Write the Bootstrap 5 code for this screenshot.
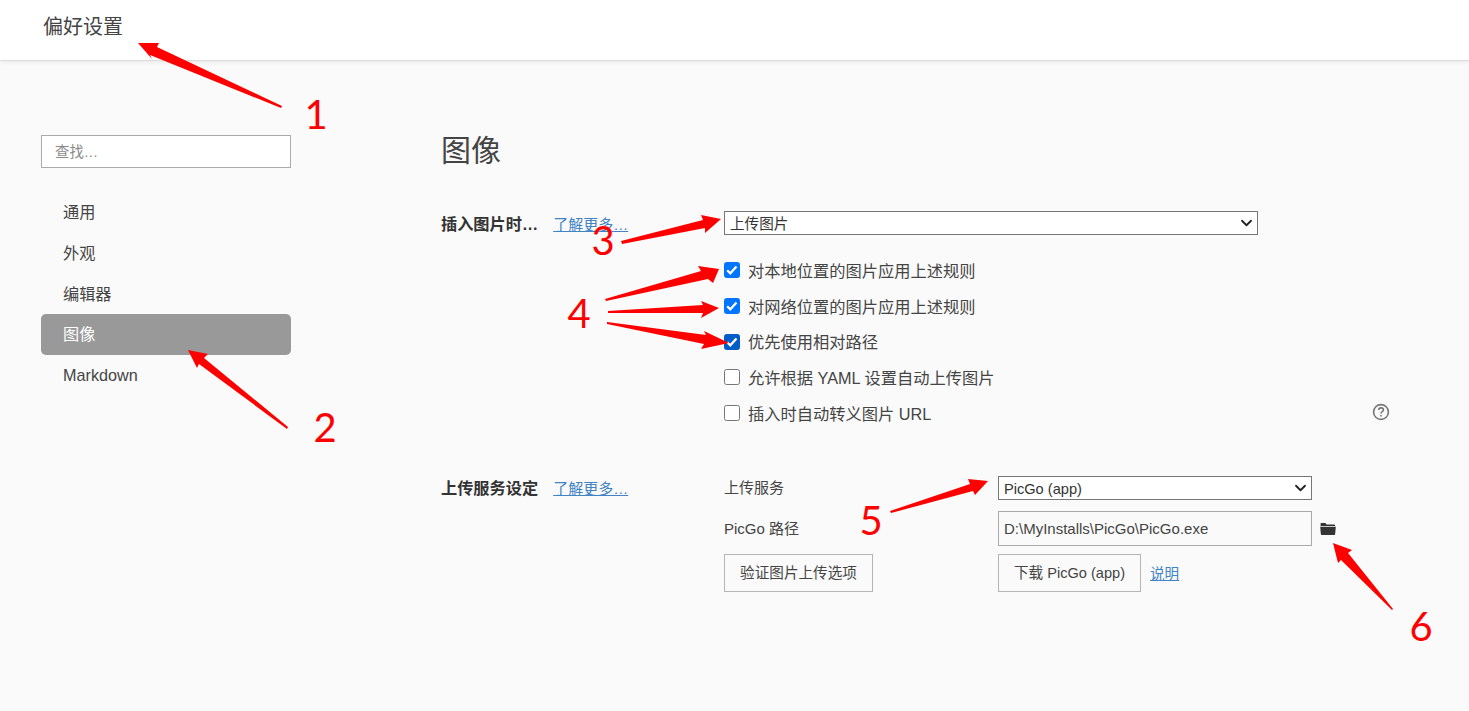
<!DOCTYPE html>
<html lang="zh-CN">
<head>
<meta charset="utf-8">
<title>偏好设置</title>
<link href="https://cdn.jsdelivr.net/npm/bootstrap@5.3.0/dist/css/bootstrap.min.css" rel="stylesheet">
<style>
html,body{height:711px;overflow:hidden}
body{background:#fafafa;color:#444;font-family:"Liberation Sans","Noto Sans CJK SC",sans-serif;font-size:16px;position:relative}
.top-bar{height:61px;background:#fff;border-bottom:1px solid #dcdcdc;box-shadow:0 1px 5px rgba(0,0,0,.08);padding:0 0 6px 43px;font-size:20px;color:#444}
.side-col{width:441px;padding:74px 150px 0 41px;flex:none}
.search-box{height:33px;border:1px solid #aaa;border-radius:0;background:#fff;font-size:14.4px;padding:0 13px;color:#444}
.search-box::placeholder{color:#8a8a8a}
.side-nav{margin-top:24px}
.side-nav .nav-link{height:40.8px;line-height:40px;padding:0 22px;color:#444;font-size:16.2px;border-radius:5px}
.side-nav .nav-link.active{background:#999;color:#fff}
.main-col{width:960px;flex:none}
.page-title{font-size:30px;font-weight:400;color:#444;line-height:46px;margin:67px 0 37px}
.sec-row{display:flex}
.sec-label{width:283px;flex:none;display:flex;align-items:baseline;padding-top:1px}
.sec-label strong{font-size:16.2px;font-weight:700;color:#333;margin-right:15px}
.more-link{font-size:15px;color:#4183c4}
.pick{height:24px;border:1px solid #767676;border-radius:0;font-size:14.6px;line-height:22px;padding:1px 24px 0 5px;color:#333;background-color:#fff;background-position:right 3px center;background-size:15px 12px;--bs-form-select-bg-img:none;background-image:url("data:image/svg+xml,%3csvg xmlns='http://www.w3.org/2000/svg' viewBox='0 0 16 16'%3e%3cpath fill='none' stroke='%23222' stroke-linecap='round' stroke-linejoin='round' stroke-width='2.4' d='M2 5l6 6 6-6'/%3e%3c/svg%3e")}
.pick-wide{width:534px}
.pick-mid{width:314px}
.check-list{width:666px;margin-top:18.6px}
.check-line{height:35.6px;display:flex;align-items:center;gap:8px;font-size:16.25px;color:#444}
.check-line .form-check-input{width:16px;height:16px;margin:0 0 2px;border:1px solid #767676;border-radius:2.5px;background-color:#fff;flex:none}
.check-line .form-check-input:checked{background-color:#0075ff;border-color:#0075ff;background-size:16px 16px;--bs-form-check-bg-image:url("data:image/svg+xml,%3csvg xmlns='http://www.w3.org/2000/svg' viewBox='0 0 16 16'%3e%3cpath fill='none' stroke='%23fff' stroke-width='2.3' d='M3.2 8.2l3.1 3.1 6.2-6.8'/%3e%3c/svg%3e")}
.check-line .form-check-input.pressed:checked{background-color:#005cc8;border-color:#005cc8}
.help-mark{margin-left:auto;margin-bottom:3px;display:block}
.second-sec{margin-top:44.4px}
.second-sec .sec-label{padding-top:0}
.field-line{display:flex;align-items:center}
.field-name{width:274px;flex:none;font-size:15px;color:#444;padding-top:1px}
.field-name-low{padding-top:4px}
.path-box{width:314px;height:35px;border:1px solid #aaa;border-radius:0;background:transparent;font-size:15px;padding:1px 5px 0;color:#444;margin:11px 0 8px}
.ghost-btn{height:38px;border:1px solid #b5b5b5;border-radius:0;background:transparent;color:#444;font-size:14.6px;padding:1px 0 0}
.btn-verify{width:149px;margin-right:125px}
.btn-get{width:143px}
.doc-link{font-size:14.6px;color:#4183c4;margin:3px 0 0 9px}
.folder-mark{margin-left:8px;margin-top:4px;display:block}
.mark-layer{position:absolute;left:0;top:0;pointer-events:none}
.mark-layer text{font-family:Lato,"Liberation Sans",sans-serif;font-size:40px;fill:#f00}
</style>
</head>
<body>
<header class="top-bar d-flex align-items-center">偏好设置</header>
<div class="d-flex">
  <aside class="side-col">
    <input class="form-control search-box shadow-none" placeholder="查找…">
    <nav class="nav flex-column side-nav">
      <a class="nav-link" href="#">通用</a>
      <a class="nav-link" href="#">外观</a>
      <a class="nav-link" href="#">编辑器</a>
      <a class="nav-link active" href="#">图像</a>
      <a class="nav-link" href="#">Markdown</a>
    </nav>
  </aside>
  <main class="main-col">
    <h2 class="page-title">图像</h2>
    <section class="sec-row">
      <div class="sec-label"><strong>插入图片时…</strong><a class="more-link" href="#">了解更多…</a></div>
      <div>
        <select class="form-select pick pick-wide shadow-none"><option>上传图片</option></select>
        <div class="check-list">
          <label class="check-line"><input class="form-check-input shadow-none" type="checkbox" checked>对本地位置的图片应用上述规则</label>
          <label class="check-line"><input class="form-check-input shadow-none" type="checkbox" checked>对网络位置的图片应用上述规则</label>
          <label class="check-line"><input class="form-check-input pressed shadow-none" type="checkbox" checked>优先使用相对路径</label>
          <label class="check-line"><input class="form-check-input shadow-none" type="checkbox">允许根据 YAML 设置自动上传图片</label>
          <label class="check-line"><input class="form-check-input shadow-none" type="checkbox">插入时自动转义图片 URL
            <svg class="help-mark" width="18" height="18" viewBox="0 0 18 18" fill="none" stroke="#777" stroke-width="1.6"><circle cx="9" cy="9" r="7.4"/><path d="M6.7 7.1c0-1.4 1-2.2 2.4-2.2 1.3 0 2.3.8 2.3 2 0 1.8-2.4 1.8-2.4 3.6"/><path d="M9 12v1.6"/></svg>
          </label>
        </div>
      </div>
    </section>
    <section class="sec-row second-sec">
      <div class="sec-label"><strong>上传服务设定</strong><a class="more-link" href="#">了解更多…</a></div>
      <div>
        <div class="field-line">
          <span class="field-name">上传服务</span>
          <select class="form-select pick pick-mid shadow-none"><option>PicGo (app)</option></select>
        </div>
        <div class="field-line">
          <span class="field-name field-name-low">PicGo 路径</span>
          <input class="form-control path-box shadow-none" value="D:\MyInstalls\PicGo\PicGo.exe">
          <svg class="folder-mark" width="16" height="12" viewBox="0 0 16 12" fill="#333"><path d="M1 0h4.5l1 1.4H14a1.2 1.2 0 0 1 1.2 1.2V3H.6V.6A.6.6 0 0 1 1 0z"/><path d="M.2 3.8h15.6l-.6 7a1.2 1.2 0 0 1-1.2 1.2H2a1.2 1.2 0 0 1-1.2-1.2z"/></svg>
        </div>
        <div class="field-line">
          <button class="btn ghost-btn btn-verify" type="button">验证图片上传选项</button>
          <button class="btn ghost-btn btn-get" type="button">下载 PicGo (app)</button>
          <a class="doc-link" href="#">说明</a>
        </div>
      </div>
    </section>
  </main>
</div>
<svg class="mark-layer" width="1469" height="711" viewBox="0 0 1469 711" fill="#f00">
  <polygon points="138,43 159,43 157,47 282,106 281,108 150,55 152,59"/>
  <polygon points="188,350 208,354 204,358 288,427 287,429 199,364 197,368"/>
  <polygon points="721,219 701,215 703,220 621,241 622,244 705,228 705,233"/>
  <polygon points="719,269 698,266 701,271 605,299 606,301 708,279 713,283"/>
  <polygon points="719,308 701,301 703,305 608,311 608,313 703,313 701,318"/>
  <polygon points="729,343 704,331 706,335 607,322 607,324 704,344 701,349"/>
  <polygon points="988,481 968,479 970,484 890,511 891,513 973,491 975,495"/>
  <polygon points="1333,543 1352,550 1348,553 1393,609 1392,610 1341,560 1338,563"/>
  <text x="316" y="129" text-anchor="middle">1</text>
  <text x="325" y="442" text-anchor="middle">2</text>
  <text x="603" y="255" text-anchor="middle">3</text>
  <text x="579" y="328" text-anchor="middle">4</text>
  <text x="871" y="535" text-anchor="middle">5</text>
  <text x="1421" y="641" text-anchor="middle">6</text>
</svg>
<script src="https://cdn.jsdelivr.net/npm/bootstrap@5.3.0/dist/js/bootstrap.bundle.min.js"></script>
</body>
</html>
